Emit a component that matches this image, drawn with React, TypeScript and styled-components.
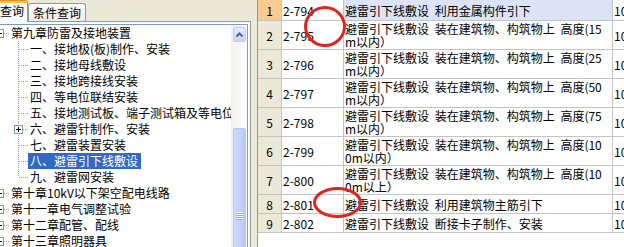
import * as React from 'react'
import styled, { createGlobalStyle } from 'styled-components'

interface ITreeNode {
  label: string
  open?: boolean
  hasChildren?: boolean
  selected?: boolean
  children?: ITreeNode[]
}

interface IRow {
  no: number
  code: string
  name: string
  unit: string
  height: number
  current?: boolean
}

const GlobalStyle = createGlobalStyle`
  html, body {
    margin: 0;
    padding: 0;
    overflow: hidden;
    background: #ece9d8;
  }
  body {
    font-family: "Noto Sans CJK SC", "Noto Sans", sans-serif;
    font-size: 12px;
    color: #000;
  }
`

const Frame = styled.div`
  display: flex;
  width: 624px;
  height: 247px;
  overflow: hidden;
`

/* left: tabbed chapter tree, partly scrolled off to the left */
const LeftPane = styled.div`
  flex: 0 0 281px;
  width: 281px;
  min-width: 0;
  margin-left: -30px;
  display: flex;
  flex-direction: column;
  min-height: 0;
`

const TabStrip = styled.div`
  height: 21px;
  display: flex;
  align-items: flex-end;
  padding-left: 2px;
  position: relative;
  z-index: 1;
`

const Tab = styled.div<{ $active?: boolean }>`
  box-sizing: border-box;
  display: flex;
  align-items: center;
  height: ${p => (p.$active ? 22 : 18)}px;
  margin-bottom: ${p => (p.$active ? -1 : 0)}px;
  padding: ${p => (p.$active ? '0 3px 2px' : '0 4px')};
  border: 1px solid #919b9c;
  border-bottom: none;
  border-top-color: ${p => (p.$active ? '#e68b2c' : '#919b9c')};
  border-radius: 3px 3px 0 0;
  background: ${p => (p.$active ? '#fcfcfe' : 'linear-gradient(#ffffff, #ecebe6)')};
  box-shadow: ${p => (p.$active ? 'inset 0 2px 0 #ffc83c' : 'none')};
  white-space: nowrap;
`

const TabPage = styled.div`
  flex: 1;
  min-height: 0;
  min-width: 0;
  display: flex;
  padding: 2px 2px 0 2px;
  border: 1px solid #919b9c;
  border-bottom: none;
  background: #fcfcfe;
`

const TreeBox = styled.div`
  flex: 1;
  min-width: 0;
  display: flex;
  border: 1px solid #7f9db9;
  border-bottom: none;
  background: #fff;
  overflow: hidden;
`

const TreeBody = styled.div`
  flex: 1;
  min-width: 0;
  padding-left: 16px;
  overflow: hidden;
`

const TreeRow = styled.div`
  display: flex;
  height: 16px;
  white-space: nowrap;
`

const Label = styled.span<{ $selected?: boolean }>`
  display: block;
  height: 16px;
  line-height: 16px;
  padding: 0 3px 0 2px;
  background: ${p => (p.$selected ? '#316ac5' : 'transparent')};
  color: ${p => (p.$selected ? '#fff' : '#000')};
`

const ScrollTrack = styled.div`
  flex: 0 0 16px;
  display: flex;
  flex-direction: column;
  overflow: hidden;
  background: linear-gradient(to right, #f3f1ec, #fdfdfa);
`

const ScrollButton = styled.div`
  flex: 0 0 auto;
  box-sizing: border-box;
  height: 15px;
  margin: 2px 1px 0 2px;
  display: flex;
  align-items: center;
  justify-content: center;
  border: 1px solid #bccdf4;
  border-radius: 2px;
  background: linear-gradient(#e3ecfe, #c3d3fb);
`

const Thumb = styled.div`
  flex: 0 0 auto;
  box-sizing: border-box;
  height: 176px;
  margin: 86px 1px 0 2px;
  display: flex;
  align-items: center;
  justify-content: center;
  border: 1px solid #b4c8f6;
  border-radius: 2px;
  background: linear-gradient(to right, #cbd9fd, #c0d1fb 60%, #b6c9f5);
`

const Grip = styled.div`
  width: 7px;
  height: 8px;
  background: repeating-linear-gradient(#eef4fe 0 1px, #8cb0f8 1px 2px);
`

const Splitter = styled.div`
  flex: 0 0 6px;
`

/* right: quota grid */
const GridPane = styled.div`
  flex: 1;
  min-width: 0;
  position: relative;
  border-left: 1px solid #8a9aae;
  background: #fff;
  overflow: hidden;
`

const GridRow = styled.div<{ $h: number }>`
  box-sizing: border-box;
  display: grid;
  grid-template-columns: 24px 62px 269px 80px;
  height: ${p => p.$h}px;
  border-bottom: 1px solid #c4c4c4;
`

const Cell = styled.div`
  display: flex;
  align-items: center;
  min-width: 0;
  padding-left: 1px;
  border-right: 1px solid #c4c4c4;
  white-space: nowrap;
  overflow: hidden;
`

const NumCell = styled(Cell)<{ $current?: boolean }>`
  justify-content: center;
  padding-left: 0;
  background: ${p => (p.$current ? '#facb8e' : '#ece9d8')};
`

const NameCell = styled(Cell)<{ $current?: boolean }>`
  white-space: pre;
  line-height: 13px;
  word-spacing: 3px;
  background: ${p => (p.$current ? '#dae4f5' : '#fff')};
`

// red hand-drawn annotation rings lying over the grid
const Ring = styled.div<{ $x: number; $y: number; $w: number; $h: number }>`
  position: absolute;
  box-sizing: border-box;
  left: ${p => p.$x}px;
  top: ${p => p.$y}px;
  width: ${p => p.$w}px;
  height: ${p => p.$h}px;
  border: 3px solid #e3231f;
  border-radius: 50%;
`

const tree: ITreeNode[] = [
  {
    label: '第九章防雷及接地装置',
    open: true,
    children: [
      { label: '一、接地极(板)制作、安装' },
      { label: '二、接地母线敷设' },
      { label: '三、接地跨接线安装' },
      { label: '四、等电位联结安装' },
      { label: '五、接地测试板、端子测试箱及等电位端子箱安装' },
      { label: '六、避雷针制作、安装', hasChildren: true },
      { label: '七、避雷装置安装' },
      { label: '八、避雷引下线敷设', selected: true },
      { label: '九、避雷网安装' },
    ],
  },
  { label: '第十章10kV以下架空配电线路', hasChildren: true },
  { label: '第十一章电气调整试验', hasChildren: true },
  { label: '第十二章配管、配线', hasChildren: true },
  { label: '第十三章照明器具', hasChildren: true },
]

const rows: IRow[] = [
  { no: 1, code: '2-794', name: '避雷引下线敷设 利用金属构件引下', unit: '10m', height: 21, current: true },
  { no: 2, code: '2-795', name: '避雷引下线敷设 装在建筑物、构筑物上 高度(15\nm以内）', unit: '10m', height: 29 },
  { no: 3, code: '2-796', name: '避雷引下线敷设 装在建筑物、构筑物上 高度(25\nm以内）', unit: '10m', height: 29 },
  { no: 4, code: '2-797', name: '避雷引下线敷设 装在建筑物、构筑物上 高度(50\nm以内）', unit: '10m', height: 29 },
  { no: 5, code: '2-798', name: '避雷引下线敷设 装在建筑物、构筑物上 高度(75\nm以内）', unit: '10m', height: 29 },
  { no: 6, code: '2-799', name: '避雷引下线敷设 装在建筑物、构筑物上 高度(10\n0m以内）', unit: '10m', height: 29 },
  { no: 7, code: '2-800', name: '避雷引下线敷设 装在建筑物、构筑物上 高度(10\n0m以上）', unit: '10m', height: 29 },
  { no: 8, code: '2-801', name: '避雷引下线敷设 利用建筑物主筋引下', unit: '10m', height: 19 },
  { no: 9, code: '2-802', name: '避雷引下线敷设 断接卡子制作、安装', unit: '10处', height: 19 },
]

const DOT = '#a0a0a0'

// one 19x16 cell of tree lines, optionally with the +/- box
const Connector = ({ last, box, open }: { last: boolean; box: boolean; open?: boolean }) => (
  <svg width="19" height="16" style={{ flex: '0 0 19px' }} shapeRendering="crispEdges">
    <line x1="9.5" y1="0" x2="9.5" y2={last ? 8 : 16} stroke={DOT} strokeDasharray="1 1" />
    <line x1={box ? 14 : 10} y1="8.5" x2="19" y2="8.5" stroke={DOT} strokeDasharray="1 1" />
    {box && (
      <g>
        <rect x="5.5" y="4.5" width="8" height="8" fill="#fff" stroke="#7898b5" />
        <line x1="7" y1="8.5" x2="12" y2="8.5" stroke="#000" />
        {!open && <line x1="9.5" y1="6" x2="9.5" y2="11" stroke="#000" />}
      </g>
    )}
  </svg>
)

const Guide = ({ line }: { line: boolean }) => (
  <svg width="19" height="16" style={{ flex: '0 0 19px' }} shapeRendering="crispEdges">
    {line && <line x1="9.5" y1="0" x2="9.5" y2="16" stroke={DOT} strokeDasharray="1 1" />}
  </svg>
)

const renderNodes = (nodes: ITreeNode[], guides: boolean[]): React.ReactNode[] =>
  nodes.flatMap((node, i) => {
    const last = i === nodes.length - 1
    const box = !!(node.children || node.hasChildren)
    const key = guides.length + '-' + node.label
    const row = (
      <TreeRow key={key}>
        {guides.map((g, j) => (
          <Guide key={j} line={g} />
        ))}
        <Connector last={last} box={box} open={node.open} />
        <Label $selected={node.selected}>{node.label}</Label>
      </TreeRow>
    )
    const kids = node.open && node.children ? renderNodes(node.children, [...guides, !last]) : []
    return [row, ...kids]
  })

const App = () => {
  return (
    <Frame>
      <GlobalStyle />
      <LeftPane>
        <TabStrip>
          <Tab $active>章节查询</Tab>
          <Tab>条件查询</Tab>
        </TabStrip>
        <TabPage>
          <TreeBox>
            <TreeBody>{renderNodes(tree, [])}</TreeBody>
            <ScrollTrack>
              <ScrollButton>
                <svg width="7" height="5">
                  <polyline points="0.5,4.5 3.5,1.5 6.5,4.5" fill="none" stroke="#4d6185" strokeWidth="2" />
                </svg>
              </ScrollButton>
              <Thumb>
                <Grip />
              </Thumb>
            </ScrollTrack>
          </TreeBox>
        </TabPage>
      </LeftPane>
      <Splitter />
      <GridPane>
        {rows.map(r => (
          <GridRow key={r.no} $h={r.height}>
            <NumCell $current={r.current}>{r.no}</NumCell>
            <Cell>{r.code}</Cell>
            <NameCell $current={r.current}>{r.name}</NameCell>
            <Cell>{r.unit}</Cell>
          </GridRow>
        ))}
        <Ring $x={46} $y={6} $w={42} $h={41} />
        <Ring $x={55} $y={187} $w={49} $h={31} />
      </GridPane>
    </Frame>
  )
}

export default App
